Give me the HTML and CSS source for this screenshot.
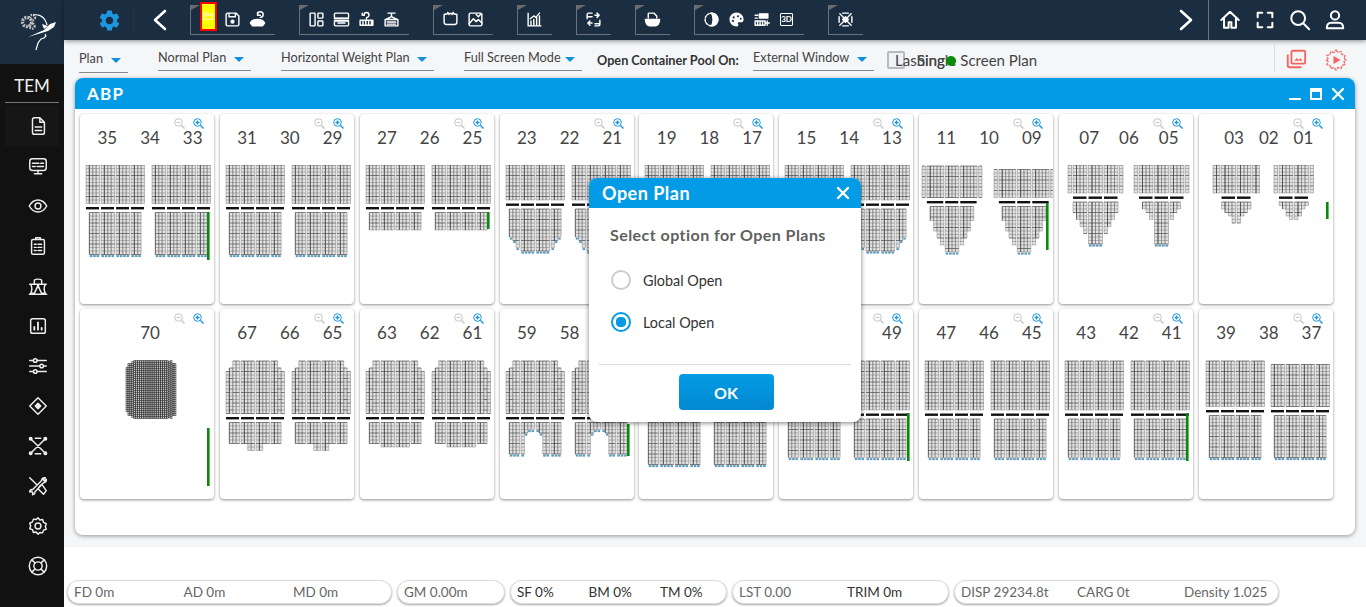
FILE: index.html
```html
<!DOCTYPE html>
<html lang="en">
<head>
    <meta charset="UTF-8">
    <meta name="viewport" content="width=device-width, initial-scale=1.0">
    <title>TEM - ABP</title>
    <link rel="stylesheet" href="styles.css">
</head>
<body>
<div class="app">
    <aside class="sidebar">
        <div class="logo">
            <svg width="64" height="64" viewBox="0 0 64 64" fill="none" stroke="#fff">
                <circle cx="27" cy="22" r="4.500" stroke="#bbb" stroke-width="3.400" stroke-dasharray="2 1"/>
                <circle cx="32.500" cy="17.500" r="2.600" stroke="#bbb" stroke-width="2.400" stroke-dasharray="1.500 1"/>
                <circle cx="32" cy="26" r="2.600" stroke="#bbb" stroke-width="2.400" stroke-dasharray="1.500 1"/>
                <path d="M33 15c5-1 10 1 12 5 1 2 2 4 2 5" stroke-width="1.200"/>
                <path d="M28 37l16-7 6-6 6-2-2 5-6 4-20 6z" fill="#fff" stroke="none"/>
                <path d="M44 29l-2-5 3 1 3 1z" fill="#fff" stroke="none"/>
                <path d="M45 34l1 2-2 2-3 1-3 4-2 7" stroke-width="1.200"/>
            </svg>
        </div>
        <div class="brand">TEM</div>
        <nav class="side-nav">
            <a class="side-item active" href="#"><svg class="ic" viewBox="0 0 24 24"><path d="M8 3h6l5 5v11a2 2 0 0 1-2 2H8a2 2 0 0 1-2-2V5a2 2 0 0 1 2-2zM14 3v5h5M9 13h7M9 17h7"/></svg></a>
            <a class="side-item" href="#"><svg class="ic" viewBox="0 0 24 24"><rect x="3" y="4" width="18" height="13" rx="3"/><path d="M6 9h7M15 9h3M6 12.5h3M11 12.5h7M12 17v3M8 20.5h8"/></svg></a>
            <a class="side-item" href="#"><svg class="ic" viewBox="0 0 24 24"><path d="M2.500 12C5 7.500 8.300 5.500 12 5.500S19 7.500 21.500 12C19 16.500 15.700 18.500 12 18.500S5 16.500 2.500 12z"/><circle cx="12" cy="12" r="3.200"/></svg></a>
            <a class="side-item" href="#"><svg class="ic" viewBox="0 0 24 24"><rect x="5" y="5" width="14" height="16" rx="1.500"/><path d="M9.500 5V3h5v2M8 10h2M12 10h4M8 13.500h2M12 13.500h4M8 17h2M12 17h4"/></svg></a>
            <a class="side-item" href="#"><svg class="ic" viewBox="0 0 24 24"><path d="M8 9V6c0-2 8-2 8 0v3M3 10h18M4 10c1.500 3 1.500 7 0 10h4c1.500-3 3.500-6 4-10 .5 4 2.500 7 4 10h4c-1.500-3-1.500-7 0-10M2.500 21h19"/></svg></a>
            <a class="side-item" href="#"><svg class="ic" viewBox="0 0 24 24"><rect x="4" y="4" width="16" height="16" rx="2"/><path d="M8 16v-3M12 16V8M16 16v-2" stroke-width="2"/></svg></a>
            <a class="side-item" href="#"><svg class="ic" viewBox="0 0 24 24"><path d="M3 6h4M11 6h10M3 12h11M18 12h3M3 18h4M11 18h10"/><circle cx="9" cy="6" r="2"/><circle cx="16" cy="12" r="2"/><circle cx="9" cy="18" r="2"/></svg></a>
            <a class="side-item" href="#"><svg class="ic" viewBox="0 0 24 24"><path d="M12 3l9 9-9 9-9-9z"/><path d="M12 9l3 3-3 3-3-3z" fill="currentColor"/></svg></a>
            <a class="side-item" href="#"><svg class="ic" viewBox="0 0 24 24"><path d="M4 4l16 16M20 4L4 20M9 3.500h6M9 20.500h6" /><circle cx="4" cy="4" r="1.400" fill="currentColor"/><circle cx="20" cy="4" r="1.400" fill="currentColor"/><circle cx="4" cy="20" r="1.400" fill="currentColor"/><circle cx="20" cy="20" r="1.400" fill="currentColor"/></svg></a>
            <a class="side-item" href="#"><svg class="ic" viewBox="0 0 24 24"><path d="M3 3l8 8M14 12l2-2 5 7-3 4-6-6zM20 3c-2-.5-4 .5-4 3L6 16c-2-.5-3 1-3 2.500l2-.5 1.500 1.500-.5 2c2 0 3-1.500 2.500-3L18 8.500c2.500 0 3.500-2 3-4l-2 2-1.500-1.500z"/></svg></a>
            <a class="side-item" href="#"><svg class="ic" viewBox="0 0 24 24"><path d="M12 3l2 2.500 3-.5 1 3 3 1.500-1 3 1 3-3 1-1 3-3-.5L12 21l-2-2.500-3 .5-1-3-3-1 1-3-1-3 3-1.500 1-3 3 .5z"/><circle cx="12" cy="12" r="3.200"/></svg></a>
            <a class="side-item" href="#"><svg class="ic" viewBox="0 0 24 24"><circle cx="12" cy="12" r="9.500"/><circle cx="12" cy="12" r="4.500"/><path d="M5.300 5.300l3.500 3.500M18.700 5.300l-3.500 3.500M5.300 18.700l3.500-3.500M18.700 18.700l-3.500-3.500"/></svg></a>
        </nav>
    </aside>

    <div class="main">
        <header class="topbar">
            <div class="gear-cell">
                <svg width="25" height="25" viewBox="0 0 24 24" fill="#1e96dc"><path d="M19.140 12.940c.04-.3.06-.61.06-.94 0-.32-.02-.64-.07-.94l2.030-1.580a.49.49 0 0 0 .12-.61l-1.920-3.320a.488.488 0 0 0-.59-.22l-2.390.96c-.5-.38-1.030-.7-1.620-.94l-.36-2.540a.484.484 0 0 0-.48-.41h-3.840c-.24 0-.43.17-.47.41l-.36 2.540c-.59.24-1.130.57-1.620.94l-2.390-.96c-.22-.08-.47 0-.59.22L2.740 8.870c-.12.21-.08.47.12.61l2.030 1.580c-.05.3-.09.63-.09.94s.02.64.07.94l-2.030 1.580a.49.49 0 0 0-.12.61l1.920 3.320c.12.22.37.29.59.22l2.390-.96c.5.38 1.030.7 1.620.94l.36 2.540c.05.24.24.41.48.41h3.840c.24 0 .44-.17.47-.41l.36-2.540c.59-.24 1.130-.56 1.620-.94l2.390.96c.22.08.47 0 .59-.22l1.920-3.320c.12-.22.07-.47-.12-.61l-2.010-1.580zM12 15.600c-1.980 0-3.600-1.620-3.600-3.600s1.620-3.600 3.600-3.600 3.600 1.620 3.600 3.600-1.620 3.600-3.600 3.600z"/></svg>
            </div>
            <button class="nav-arrow back"><svg width="20" height="24" viewBox="0 0 20 24" fill="none" stroke="#fff" stroke-width="2.600" stroke-linecap="round" stroke-linejoin="round"><path d="M15 3L5 12l10 9"/></svg></button>

            <div class="tool-group">
                <span class="tool"><span class="tool-on"><svg width="11" height="10" viewBox="0 0 11 10" fill="none" stroke="#fff8c0" stroke-width="1.200"><path d="M.5 8.500v-7h3l1 1.500h5v1M.5 8.500l1.500-4.500h8.500l-1.500 4.500z"/></svg></span></span>
                <span class="tool"><svg class="ic ic-top" viewBox="0 0 24 24"><path d="M5 3h12l4 4v12a2 2 0 0 1-2 2H5a2 2 0 0 1-2-2V5a2 2 0 0 1 2-2zM7 3v5h9V3"/><circle cx="12" cy="15" r="2" fill="currentColor"/></svg></span>
                <span class="tool"><svg class="ic ic-top" viewBox="0 0 24 24"><path d="M14 8a4 4 0 1 0-4-4M10 1v4h4" transform="translate(2 1)"/><path d="M2 17c2-4 5-5 10-5s8 1 10 5l-3 4H5z" fill="currentColor"/></svg></span>
            </div>
            <div class="tool-group">
                <span class="tool"><svg class="ic ic-top" viewBox="0 0 24 24"><rect x="3" y="3" width="7" height="18" rx="1"/><rect x="14" y="3" width="7" height="7" rx="1"/><rect x="14" y="14" width="7" height="7" rx="1"/></svg></span>
                <span class="tool"><svg class="ic ic-top" viewBox="0 0 24 24"><rect x="2" y="3" width="20" height="7" rx="1.500"/><rect x="2" y="14" width="20" height="7" rx="1.500"/><path d="M2 10.500h20M2 13.500h20M7 17h10"/></svg></span>
                <span class="tool"><svg class="ic ic-top" viewBox="0 0 24 24"><path d="M12 11V9a3.500 3.500 0 1 0-3.500-3.500M6 3v3h3M3 13h18v7H3zM7 13v7M11 13v7M15 13v7M19 13v7"/></svg></span>
                <span class="tool"><svg class="ic ic-top" viewBox="0 0 24 24"><path d="M7 3h10M12 3v5M4 12l8-4 8 4zM3 12h18v9H3zM6 15.500h12M6 18.500h12"/></svg></span>
            </div>
            <div class="tool-group">
                <span class="tool"><svg class="ic ic-top" viewBox="0 0 24 24"><path d="M3 5c6-2 12-2 18 0v11a3 3 0 0 1-3 3H6a3 3 0 0 1-3-3zM8 2l2 3M16 2l-2 3"/></svg></span>
                <span class="tool"><svg class="ic ic-top" viewBox="0 0 24 24"><rect x="3" y="3" width="18" height="18" rx="2"/><path d="M3 18l6-7 4 4 3-3 5 5M13 5l3 3 3-3"/></svg></span>
            </div>
            <div class="tool-group">
                <span class="tool"><svg class="ic ic-top" viewBox="0 0 24 24"><path d="M3 3v18h18M7 21v-7M11 21v-9M15 21V9M19 21V7M6 11l5-4 3 2 5-6"/></svg></span>
            </div>
            <div class="tool-group">
                <span class="tool"><svg class="ic ic-top" viewBox="0 0 24 24"><path d="M3 11V5a2 2 0 0 1 2-2h5M3 8h7M14 6h6M17 3l3 3-3 3M21 13v6a2 2 0 0 1-2 2h-5M14 18h7M10 17H4M7 14l-3 3 3 3"/></svg></span>
            </div>
            <div class="tool-group">
                <span class="tool"><svg class="ic ic-top" viewBox="0 0 24 24"><path d="M6 10V4a1 1 0 0 1 1-1h7l4 4v3" /><path d="M2 12h20c0 5-3 9-6 9H8c-3 0-6-4-6-9z" fill="currentColor"/></svg></span>
            </div>
            <div class="tool-group">
                <span class="tool"><svg class="ic ic-top" viewBox="0 0 24 24"><circle cx="12" cy="12" r="9" stroke-dasharray="3 2"/><path d="M12 3a9 9 0 0 1 0 18c3-5 3-13 0-18z" fill="currentColor"/></svg></span>
                <span class="tool"><svg class="ic ic-top" viewBox="0 0 24 24"><path d="M12 3a9 9 0 1 0 0 18c2 0 2-2 1-3s0-3 2-3h3c2 0 3-1 3-3 0-5-4-9-9-9z" fill="currentColor"/><circle cx="8" cy="9" r="1.500" fill="#1b2d40" stroke="none"/><circle cx="14" cy="7.500" r="1.500" fill="#1b2d40" stroke="none"/><circle cx="7" cy="14" r="1.500" fill="#1b2d40" stroke="none"/><circle cx="18" cy="11" r="1.300" fill="#1b2d40" stroke="none"/></svg></span>
                <span class="tool"><svg class="ic ic-top" viewBox="0 0 24 24"><path d="M9 4h12v6H9z" fill="currentColor"/><path d="M3 14h14v6H3zM6.500 14v6M10 14v6M13.500 14v6M3 6h4M3 10h3M20 14v6M18 17h5" /></svg></span>
                <span class="tool threed">3D</span>
            </div>
            <div class="tool-group">
                <span class="tool"><svg class="ic ic-top" viewBox="0 0 24 24"><path d="M4 4l16 16M20 4L4 20M8 3h8M8 21h8M3 8v8M21 8v8"/><path d="M8 12l4-4 4 4-4 4z" fill="currentColor"/></svg></span>
            </div>

            <button class="nav-arrow forward"><svg width="20" height="24" viewBox="0 0 20 24" fill="none" stroke="#fff" stroke-width="2.600" stroke-linecap="round" stroke-linejoin="round"><path d="M5 3l10 9-10 9"/></svg></button>
            <div class="top-actions">
                <span class="action"><svg class="ic ic-act" viewBox="0 0 24 24"><path d="M2.500 12L12 3l9.500 9M5.500 10v10.500h5v-6h3v6h5V10"/></svg></span>
                <span class="action"><svg class="ic ic-act" viewBox="0 0 24 24" stroke-linecap="square"><path d="M4 9V4h5M15 4h5v5M20 15v5h-5M9 20H4v-5"/></svg></span>
                <span class="action"><svg class="ic ic-act" viewBox="0 0 24 24"><circle cx="10" cy="10" r="7.500"/><path d="M15.500 15.500L22 22"/></svg></span>
                <span class="action"><svg class="ic ic-act" viewBox="0 0 24 24"><circle cx="12" cy="7" r="4.500"/><path d="M3 21c0-4 2-6 5-6h8c3 0 5 2 5 6z"/></svg></span>
            </div>
        </header>

        <section class="workspace">
            <div class="filters">
                <div class="select select-plan"><span>Plan</span><i class="caret"></i></div>
                <div class="select select-normal"><span>Normal Plan</span><i class="caret"></i></div>
                <div class="select select-weight"><span>Horizontal Weight Plan</span><i class="caret"></i></div>
                <div class="select select-mode"><span>Full Screen Mode</span><i class="caret"></i></div>
                <label class="pool-label">Open Container Pool On:</label>
                <div class="select select-window"><span>External Window</span><i class="caret"></i></div>
                <span class="checkbox"></span>
                <span class="lashing">Lashing</span>
                <span class="single">Single<i class="dot"></i> Screen Plan</span>
                <div class="filter-actions">
                    <svg class="red-ic" width="22" height="22" viewBox="0 0 24 24" fill="none" stroke="#f4645f" stroke-width="2"><path d="M3 7v12a2 2 0 0 0 2 2h13"/><rect x="7" y="3" width="15" height="14" rx="1.500"/><path d="M10 14l3-3 2 2 2-2 2 3z" fill="#f4645f" stroke="none"/></svg>
                    <svg class="red-ic" width="24" height="24" viewBox="0 0 24 24" fill="none" stroke="#f4645f" stroke-width="1.300"><path d="M12 2l2 2.500 3-1 1 3 3 1-1 3 2 1.500-2 1.500 1 3-3 1-1 3-3-1-2 2.500-2-2.500-3 1-1-3-3-1 1-3-2-1.500 2-1.500-1-3 3-1 1-3 3 1z" stroke-dasharray="3 1"/><path d="M9.500 8l7 4-7 4z" fill="#f4645f" stroke="none"/></svg>
                </div>
            </div>

            <div class="window">
                <div class="window-head">
                    <span class="window-title">ABP</span>
                    <div class="window-ctrl">
                        <span class="ctrl-min"></span>
                        <span class="ctrl-max"></span>
                        <svg width="14" height="14" viewBox="0 0 14 14" stroke="#fff" stroke-width="2.200" stroke-linecap="round"><path d="M2 2l10 10M12 2L2 12"/></svg>
                    </div>
                </div>
                <div class="cards" id="cards"></div>
            </div>
        </section>

        <footer class="statusbar">
            <div class="pill pill-draft"><span>FD 0m</span><span>AD 0m</span><span>MD 0m</span></div>
            <div class="pill pill-gm"><span>GM 0.00m</span></div>
            <div class="pill pill-stress"><span class="dark">SF 0%</span><span class="dark">BM 0%</span><span class="dark">TM 0%</span></div>
            <div class="pill pill-list"><span>LST 0.00</span><span class="dark">TRIM 0m</span></div>
            <div class="pill pill-disp"><span>DISP 29234.8t</span><span>CARG 0t</span><span>Density 1.025</span></div>
        </footer>
    </div>

    <div class="dialog">
        <div class="dialog-head">
            <span>Open Plan</span>
            <svg width="14" height="14" viewBox="0 0 14 14" stroke="#fff" stroke-width="2.400" stroke-linecap="round"><path d="M2 2l10 10M12 2L2 12"/></svg>
        </div>
        <div class="dialog-body">
            <p class="dialog-question">Select option for Open Plans</p>
            <div class="radio-row"><span class="radio"></span>Global Open</div>
            <div class="radio-row"><span class="radio checked"></span>Local Open</div>
        </div>
        <div class="dialog-foot"><button class="ok-btn">OK</button></div>
    </div>
</div>
<script src="script.js"></script>
</body>
</html>
```

FILE: styles.css
```css
* {
    box-sizing: border-box;
}
body {
    margin: 0;
    height: 607px;
    overflow: hidden;
    background: #fff;
    font-family: Lato, "Open Sans", sans-serif;
    color: #444;
}
button {
    border: none;
    background: none;
    padding: 0;
    font-family: inherit;
}
.app {
    position: relative;
    display: flex;
    height: 607px;
}

/* barra lateral */
.sidebar {
    width: 64px;
    flex: none;
    background: #111;
    color: #fff;
}
.logo {
    height: 64px;
    background: #1b2d40;
}
.brand {
    height: 39px;
    margin: 0 5px;
    border-bottom: 1px solid #777;
    font-size: 17px;
    line-height: 44px;
    text-align: center;
    color: #eee;
}
.side-nav {
    display: flex;
    flex-direction: column;
    padding: 3px 5px 0;
}
.side-item {
    height: 40px;
    padding-left: 21px;
    display: flex;
    align-items: center;
    color: #eee;
}
.side-item.active {
    background: #161616;
}
.ic {
    width: 22px;
    height: 22px;
    fill: none;
    stroke: currentColor;
    stroke-width: 1.6;
    stroke-linecap: round;
    stroke-linejoin: round;
    margin-left: 1px;
}

.main {
    flex: 1;
    min-width: 0;
    display: flex;
    flex-direction: column;
}

/* barra superior */
.topbar {
    position: relative;
    z-index: 2;
    height: 40px;
    flex: none;
    background: #1b2d40;
    box-shadow: 0 1px 5px rgba(0, 0, 0, 0.45);
    display: flex;
    align-items: center;
    color: #fff;
}
.gear-cell {
    width: 70px;
    height: 34px;
    padding-left: 33px;
    border-right: 1px solid #22364a;
    display: flex;
    align-items: center;
}
.nav-arrow {
    width: 20px;
    height: 24px;
}
.nav-arrow.back {
    margin-left: 16px;
    margin-right: 20px;
}
.nav-arrow.forward {
    margin-left: auto;
    margin-right: 12px;
}
.tool-group {
    position: relative;
    top: 5px;
    height: 30px;
    margin-top: -11px;
    margin-right: 24px;
    padding: 7px 5px 0 4px;
    border-left: 1px solid #68727c;
    border-bottom: 1px solid #68727c;
    display: flex;
    align-items: flex-start;
}
.tool-group::before {
    content: "";
    position: absolute;
    left: 0;
    top: 0;
    border-left: 9px solid #6b6b6b;
    border-bottom: 5px solid transparent;
}
.tool {
    width: 25px;
    height: 16px;
    display: flex;
    align-items: center;
    justify-content: center;
}
.ic-top {
    width: 17px;
    height: 17px;
    margin: 0;
    stroke-width: 2;
}
.tool-on {
    width: 17px;
    height: 29px;
    margin-top: -7px;
    margin-left: 2px;
    border: 2px solid #f00;
    background: #ff0;
    display: flex;
    align-items: center;
    justify-content: center;
}
.threed {
    width: 13px;
    height: 13px;
    margin: 1px 6px;
    border: 1px solid #fff;
    border-radius: 1px;
    font-size: 8px;
    font-weight: 700;
}
.top-actions {
    height: 40px;
    padding-left: 3px;
    padding-right: 14px;
    border-left: 1px solid #68727c;
    display: flex;
    align-items: center;
}
.action {
    width: 35px;
    display: flex;
    justify-content: center;
}
.ic-act {
    width: 22px;
    height: 22px;
    margin: 0;
    stroke-width: 2.200;
}

/* filtros */
.workspace {
    height: 507px;
    flex: none;
    background: #f5f6f8;
}
.filters {
    height: 38px;
    padding-left: 15px;
    display: flex;
    font-size: 12.700px;
    color: #444;
}
.select {
    height: 31px;
    padding-top: 10px;
    margin-right: 30px;
    border-bottom: 1px solid #888;
    display: flex;
    justify-content: space-between;
    white-space: nowrap;
    line-height: 15px;
}
.select-plan {
    width: 49px;
    height: 33px;
    padding-top: 11px;
}
.select-normal {
    width: 93px;
}
.select-weight {
    width: 153px;
}
.select-mode {
    width: 118px;
    margin-right: 15px;
}
.select-window {
    width: 121px;
    margin-right: 13px;
}
.caret {
    width: 0;
    height: 0;
    margin-top: 7px;
    margin-right: 7px;
    border-left: 5px solid transparent;
    border-right: 5px solid transparent;
    border-top: 5px solid #0f8fdc;
}
.pool-label {
    width: 156px;
    padding-top: 12px;
    font-size: 12.700px;
    font-weight: 700;
    color: #333;
    white-space: nowrap;
}
.checkbox {
    width: 18px;
    height: 18px;
    margin-top: 11px;
    border: 2px solid #bbb;
    border-radius: 2px;
    background: #eef3f8;
}
.lashing,
.single {
    padding-top: 11px;
    font-size: 15px;
    white-space: nowrap;
}
.lashing {
    margin-left: -10px;
    width: 22px;
}
.single {
    display: flex;
    position: relative;
}
.dot {
    width: 10px;
    height: 10px;
    margin: 5px 4px 0 -10px;
    border-radius: 50%;
    background: #0a8a0a;
}
.filter-actions {
    margin-left: auto;
    margin-top: 4px;
    height: 28px;
    width: 92px;
    padding: 4px 18px 0 10px;
    border-left: 1px solid #ddd;
    display: flex;
    justify-content: space-between;
}

/* ventana */
.window {
    width: 1280px;
    height: 457px;
    margin-left: 11px;
    border-radius: 8px;
    background: #fff;
    box-shadow: 0 1px 4px rgba(0, 0, 0, 0.4);
}
.window-head {
    height: 31px;
    padding: 0 10px 0 12px;
    border-radius: 8px 8px 0 0;
    background: #039be5;
    color: #fff;
    display: flex;
    align-items: center;
    justify-content: space-between;
}
.window-title {
    font-size: 17px;
    letter-spacing: 1.200px;
    font-weight: 700;
}
.window-ctrl {
    display: flex;
    align-items: center;
    gap: 9px;
}
.ctrl-min {
    width: 12px;
    height: 2px;
    margin-top: 10px;
    background: #fff;
}
.ctrl-max {
    width: 12px;
    height: 12px;
    border: 2px solid #fff;
    border-top-width: 4px;
    border-radius: 1px;
}
.cards {
    padding: 5px;
    display: grid;
    grid-template-columns: repeat(9, 134px);
    grid-auto-rows: 190px;
    column-gap: 5.850px;
    row-gap: 5px;
}
.card {
    position: relative;
    border-radius: 4px;
    background: #fff;
    box-shadow: 0 1px 3px rgba(0, 0, 0, 0.45);
    overflow: hidden;
}
.zooms {
    height: 14px;
    padding: 4px 10px 0 0;
    display: flex;
    justify-content: flex-end;
    gap: 8px;
}
.bays {
    height: 37px;
    padding-left: 6px;
    display: flex;
    justify-content: center;
    gap: 23px;
    font-size: 17px;
    line-height: 20px;
    color: #444;
}
.bays-mid {
    gap: 20px;
}
.bays-tight {
    gap: 15px;
}
.plan {
    display: block;
}
.cell-bg {
    fill: #e2e2e2;
}
.cell-lines {
    fill: none;
    stroke: #555;
    stroke-width: 0.35;
}
.cell-heavy {
    fill: none;
    stroke: #333;
    stroke-width: 0.6;
}
.dense-lines {
    fill: none;
    stroke: #222;
    stroke-width: 0.55;
}
.hatch {
    fill: #111;
}
.marks {
    fill: #3383ad;
    opacity: 0.8;
}
.weight {
    fill: #0a8a0a;
}

/* barra de estado */
.statusbar {
    flex: 1;
    padding: 33px 0 0 3px;
    background: #fff;
    display: flex;
    gap: 5px;
    font-size: 13.500px;
    color: #666;
}
.pill {
    height: 24px;
    flex: none;
    padding: 0 6px;
    border: 1px solid #ddd;
    border-radius: 12px;
    background: #fff;
    box-shadow: 0 1px 2px rgba(0, 0, 0, 0.35);
    display: flex;
    align-items: center;
    white-space: nowrap;
}
.pill span {
    flex: none;
}
.pill .dark {
    color: #333;
}
.pill-draft {
    width: 325px;
}
.pill-draft span {
    width: 109.500px;
}
.pill-gm {
    width: 108px;
}
.pill-stress {
    width: 217px;
}
.pill-stress span {
    width: 71.500px;
}
.pill-list {
    width: 217px;
}
.pill-list span:first-child {
    width: 108px;
}
.pill-disp {
    width: 325px;
}
.pill-disp span {
    width: 116px;
}
.pill-disp span:nth-child(2) {
    width: 107px;
}

/* dialogo */
.dialog {
    position: absolute;
    left: 589px;
    top: 178px;
    width: 272px;
    height: 244px;
    border-radius: 8px;
    background: #fff;
    box-shadow: 0 1px 5px rgba(0, 0, 0, 0.5);
    z-index: 5;
}
.dialog-head {
    height: 30px;
    padding: 0 11px 0 13px;
    border-radius: 8px 8px 0 0;
    background: #039be5;
    color: #fff;
    font-size: 18px;
    letter-spacing: 0.5px;
    font-weight: 700;
    display: flex;
    align-items: center;
    justify-content: space-between;
}
.dialog-body {
    height: 157px;
    margin: 0 10px;
    padding: 0 0 0 11px;
    border-bottom: 1px solid #ddd;
}
.dialog-question {
    margin: 0;
    padding-top: 17px;
    height: 51px;
    font-size: 16px;
    letter-spacing: 0.45px;
    font-weight: 700;
    color: #5f5f5f;
}
.radio-row {
    height: 42px;
    padding-left: 1px;
    display: flex;
    align-items: center;
    gap: 12px;
    font-size: 14.400px;
    color: #333;
}
.radio {
    width: 20px;
    height: 20px;
    border: 2px solid #ccc;
    border-radius: 50%;
}
.radio.checked {
    border-color: #039be5;
    background: radial-gradient(circle, #039be5 0 5px, #fff 5.500px);
}
.dialog-foot {
    padding: 9px 0 0 2px;
    display: flex;
    justify-content: center;
}
.ok-btn {
    width: 95px;
    height: 36px;
    border-radius: 4px;
    background: linear-gradient(#039be5, #0288d1);
    color: #fff;
    font-size: 16px;
    font-weight: 700;
}
```

FILE: script.js
```js
// Cada carta: numeros de bahia y bloques. Las cadenas son alturas de pila en base 36,
// un espacio separa grupos de pilas.
var SW = 3.375, RH = 3.5, TOP = 51;

var BODY = "cdff ffff ffff ffdc";
var cards = [
    { bays: ["35", "34", "33"], rows: 11, marks: 1, w: [127, 98, 48], blocks: [[6, "bbbb bbbb bbbb bbbb", "0ccc cccc cccc ccc0"], [72, "bbbb bbbb bbbb bbbb", "0ccc cccc cccc ccc0"]] },
    { bays: ["31", "30", "29"], rows: 11, marks: 1, blocks: [[6, "bbbb bbbb bbbb bbbb", "0ccc cccc cccc ccc0"], [72, "bbbb bbbb bbbb bbbb", "0ccc cccc cccc ccc0"]] },
    { bays: ["27", "26", "25"], rows: 11, w: [127, 98, 17], blocks: [[6, "bbbb bbbb bbbb bbbb", "0555 5555 5555 5550"], [72, "bbbb bbbb bbbb bbbb", "0555 5555 5555 5550"]] },
    { bays: ["23", "22", "21"], rows: 10, marks: 1, blocks: [[6, "aaaa aaaa aaaa aaaa", "089b cccc cccc b980"], [72, "aaaa aaaa aaaa aaaa", "089b cccc cccc b980"]] },
    { bays: ["19", "18", "17"], rows: 10, marks: 1, blocks: [[6, "aaaa aaaa aaaa aaaa", "089b cccc cccc b980"], [72, "aaaa aaaa aaaa aaaa", "089b cccc cccc b980"]] },
    { bays: ["15", "14", "13"], rows: 10, marks: 1, blocks: [[6, "aaaa aaaa aaaa aaaa", "089b cccc cccc b980"], [72, "aaaa aaaa aaaa aaaa", "089b cccc cccc b980"]] },
    { bays: ["11", "10", "09"], rows: 9, top: 52, tip: 1, w: [127, 89, 47], blocks: [[3, "9 99999 9999 99999 9", "0 0479b dddd b9740 0"], [75, "8 88888 8888 88888 8", "0 0479b dddd b9740 0"]] },
    { bays: ["07", "06", "05"], cls: "bays-mid", rows: 8, sw: 3.5, tip: 1, blocks: [[9, "8 8888 8888 8888 8", "0 3579 cccc 9753 0"], [75, "8 8888 8888 8888 8", "0 0235 cccc 5320 0"]] },
    { bays: ["03", "02", "01"], cls: "bays-tight", rows: 8, sw: 3.5, w: [127, 88, 17], blocks: [[14, "88 8888 8888 88", "00 2346 6432 00"], [75, "8 8888 8888 8", "0 1245 5421 0"]] },

    { bays: ["70"], dense: "mqqsttttttttttttttttttstqqm".slice(0, 26), w: [127, 119, 58] },
    { bays: ["67", "66", "65"], rows: 15, top: 52, blocks: [[6, BODY, "0666 6688 8866 6660"], [72, BODY, "0666 6688 8866 6660"]] },
    { bays: ["63", "62", "61"], rows: 15, top: 52, blocks: [[6, BODY, "0666 7777 7777 6660"], [72, BODY, "0666 7777 7777 6660"]] },
    { bays: ["59", "58", "57"], rows: 15, top: 52, marks: 1, w: [127, 115, 32], blocks: [[6, BODY, "0999 9322 2399 9990"], [72, BODY, "0999 9322 2399 9990"]] },
    { bays: ["55", "54", "53"], rows: 15, top: 52, marks: 1, blocks: [[6, BODY, "0ccc cccc cccc ccc0"], [72, BODY, "0ccc cccc cccc ccc0"]] },
    { bays: ["51", "50", "49"], rows: 14, top: 52, marks: 1, w: [128, 104, 48], blocks: [[6, "eeee eeee eeee eeee", "0bbb bbbb bbbb bbb0"], [72, "eeee eeee eeee eeee", "0bbb bbbb bbbb bbb0"]] },
    { bays: ["47", "46", "45"], rows: 14, top: 52, marks: 1, blocks: [[6, "eeee eeee eeee eeee", "0bbb bbbb bbbb bbb0"], [72, "eeee eeee eeee eeee", "0bbb bbbb bbbb bbb0"]] },
    { bays: ["43", "42", "41"], rows: 14, top: 52, marks: 1, w: [127, 104, 48], blocks: [[6, "eeee eeee eeee eeee", "0bbb bbbb bbbb bbb0"], [72, "eeee eeee eeee eeee", "0bbb bbbb bbbb bbb0"]] },
    { bays: ["39", "38", "37"], rows: 13, top: 52, marks: 1, blocks: [[7, "dddd dddd dddd dddd", "0ccc cccc cccc ccc0"], [72, "cccc cccc cccc cccc", "0ccc cccc cccc ccc0"]] }
];

function stacks(x, y, n, sw, rh, bottom) {
    // devuelve [fondo, lineas, lineas fuertes] de una pila de n celdas
    var h = n * rh;
    var y0 = bottom ? y - h : y;
    var bg = "M" + x + " " + y0 + "h" + sw + "v" + h + "h-" + sw + "z";
    var lines = "M" + x + " " + y0 + "v" + h + "M" + (x + sw) + " " + y0 + "v" + h;
    var heavy = "";
    for (var i = 0; i <= n; i++) {
        var row = "M" + x + " " + (y0 + i * rh) + "h" + sw;
        if (i % 3 === 0) {
            heavy += row;
        } else {
            lines += row;
        }
    }
    return [bg, lines, heavy];
}

function drawBlock(card, block) {
    var sw = card.sw || SW;
    var base = (card.top || TOP) - TOP;
    var bg = "", lines = "", heavy = "", bars = "", marks = "";
    var upperEnd = base + card.rows * RH;
    var barY = upperEnd + 3.5;
    var lowerY = barY + 5.5;
    var ups = block[1].split(" "), lows = block[2].split(" ");
    var x = block[0];

    ups.forEach(function (group, g) {
        var gx = x;
        group.split("").forEach(function (c, i) {
            var s = stacks(x, upperEnd, parseInt(c, 36), sw, RH, true);
            bg += s[0];
            lines += s[1];
            heavy += s[2];
            if (i === 1) {
                heavy += "M" + x + " " + (upperEnd - parseInt(c, 36) * RH) + "v" + parseInt(c, 36) * RH;
            }
            var low = lows[g].charAt(i);
            if (low !== "0") {
                var n = parseInt(low, 36);
                var t = stacks(x, lowerY, n, sw, RH, false);
                bg += t[0];
                lines += t[1];
                heavy += t[2];
                if (i === 1) {
                    heavy += "M" + x + " " + lowerY + "v" + n * RH;
                }
                if (card.marks || (card.tip && n >= 12)) {
                    marks += '<rect x="' + (x + 0.4) + '" y="' + (lowerY + n * RH + 0.6) + '" width="' + (sw - 0.8) + '" height="2"/>';
                }
            }
            x += sw;
        });
        if (group.length >= 3) {
            bars += '<rect x="' + gx + '" y="' + barY + '" width="' + (x - gx - 0.5) + '" height="2.400"/>';
        }
        x += 1.5;
    });

    return '<path class="cell-bg" d="' + bg + '"/><path class="cell-lines" d="' + lines + '"/><path class="cell-heavy" d="' + heavy + '"/>' +
        '<g class="hatch">' + bars + '</g><g class="marks">' + marks + '</g>';
}

function drawDense(card) {
    var bg = "", lines = "", sw = 1.92, rh = 2;
    card.dense.split("").forEach(function (c, i) {
        var n = parseInt(c, 36);
        var s = stacks(46 + i * sw, 29 - n * rh / 2 + 0.5, n, sw, rh, false);
        bg += s[0];
        lines += s[1] + s[2];
    });
    return '<path class="cell-bg" d="' + bg + '"/><path class="dense-lines" d="' + lines + '"/>';
}

function magnifier(color, plus) {
    return '<svg width="11" height="11" viewBox="0 0 11 11" fill="none" stroke="' + color + '" stroke-width="1">' +
        '<circle cx="4.500" cy="4.500" r="3.800"/><path d="M7.500 7.500l3 3" stroke-width="1.400"/>' +
        (plus ? '<path d="M2.500 4.500h4M4.500 2.500v4" stroke-width="1.400"/>' : '<path d="M2.700 4.500h3.600"/>') + '</svg>';
}

var html = "";
cards.forEach(function (card) {
    var svg = card.dense ? drawDense(card) : card.blocks.map(function (b) { return drawBlock(card, b); }).join("");
    if (card.w) {
        svg += '<rect class="weight" x="' + card.w[0] + '" y="' + (card.w[1] - TOP) + '" width="2.600" height="' + card.w[2] + '"/>';
    }
    html += '<div class="card"><div class="zooms">' + magnifier("#c4c4c4", false) + magnifier("#1e96dc", true) + '</div>' +
        '<div class="bays ' + (card.cls || "") + '">' + card.bays.map(function (b) { return "<span>" + b + "</span>"; }).join("") + '</div>' +
        '<svg class="plan" width="134" height="139" viewBox="0 0 134 139">' + svg + '</svg></div>';
});
document.getElementById("cards").innerHTML = html;
```
